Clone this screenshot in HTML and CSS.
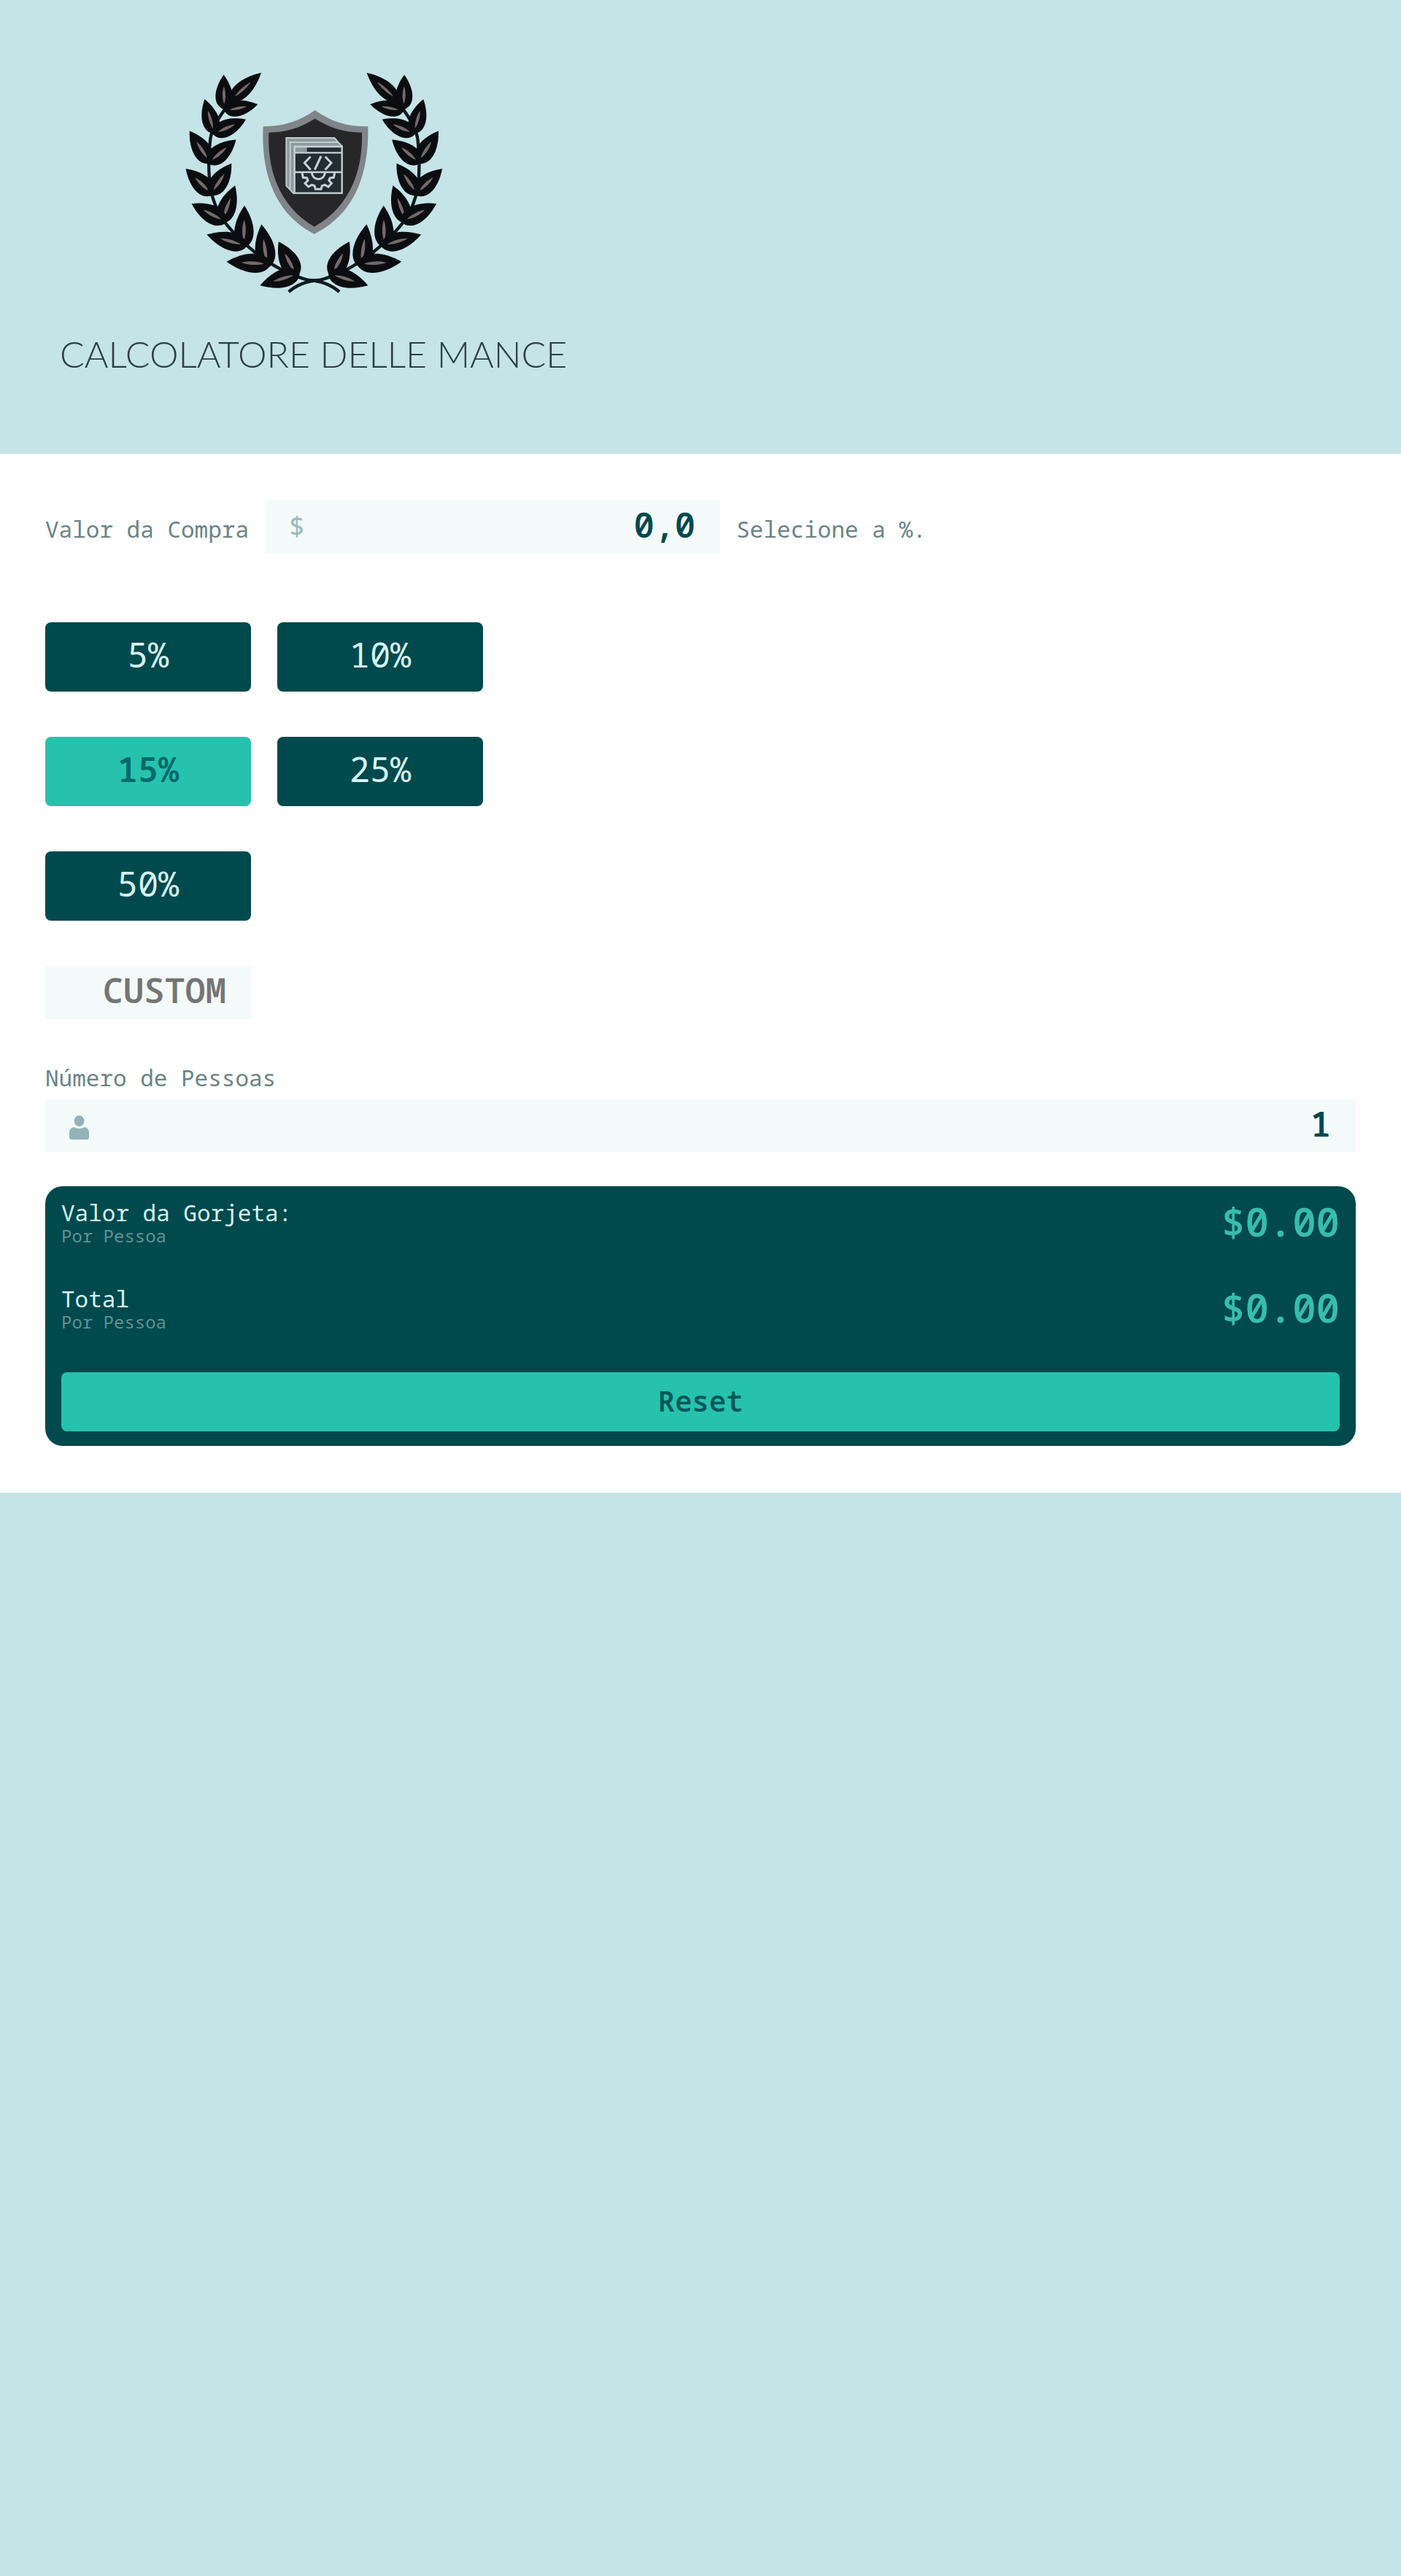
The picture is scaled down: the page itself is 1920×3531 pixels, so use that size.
FILE: index.html
```html
<!DOCTYPE html>
<html lang="pt-BR">
<head>
<meta charset="utf-8">
<title>Calcolatore delle Mance</title>
<link rel="stylesheet" href="styles.css">
</head>
<body>
<header class="header">
  <div class="brand">
    <svg class="brand-mark" viewBox="0 0 1260 1020" aria-hidden="true">
      <defs>
        <g id="leaf">
          <path fill="#0b0d10" d="M0 0C-32-12-30-58 0-102C30-58 32-12 0 0Z"/>
          <path fill="#75696a" d="M0-16C-6-32-5-54 0-68C5-54 6-32 0-16Z"/>
        </g>
        <g id="branch">
          <path fill="none" stroke="#0b1a20" stroke-width="13" d="M300 165C270 200 215 270 205 330C197 390 195 480 208 550C225 610 240 650 290 705C350 770 420 830 500 870C540 890 575 905 610 912C660 915 700 930 735 960"/>
          <use href="#leaf" transform="translate(285 175) rotate(48) scale(1.4 1.7)"/>
          <use href="#leaf" transform="translate(262 210) rotate(-1) scale(1.5 1.4)"/>
          <use href="#leaf" transform="translate(262 216) rotate(79) scale(1.4 1.38)"/>
          <use href="#leaf" transform="translate(222 310) rotate(-16) scale(1.5 1.45)"/>
          <use href="#leaf" transform="translate(215 312) rotate(66) scale(1.5 1.46)"/>
          <use href="#leaf" transform="translate(206 432) rotate(-33) scale(1.6 1.56)"/>
          <use href="#leaf" transform="translate(194 432) rotate(50) scale(1.6 1.49)"/>
          <use href="#leaf" transform="translate(216 562) rotate(-46) scale(1.6 1.53)"/>
          <use href="#leaf" transform="translate(204 562) rotate(34) scale(1.6 1.54)"/>
          <use href="#leaf" transform="translate(250 678) rotate(20) scale(1.6 1.62)"/>
          <use href="#leaf" transform="translate(272 674) rotate(-62) scale(1.6 1.6)"/>
          <use href="#leaf" transform="translate(342 780) rotate(1) scale(1.7 1.71)"/>
          <use href="#leaf" transform="translate(356 772) rotate(-74) scale(1.6 1.69)"/>
          <use href="#leaf" transform="translate(440 862) rotate(-8) scale(1.75 1.78)"/>
          <use href="#leaf" transform="translate(454 846) rotate(-87) scale(1.7 1.79)"/>
          <use href="#leaf" transform="translate(562 898) rotate(-28) scale(1.7 1.6)"/>
          <use href="#leaf" transform="translate(572 884) rotate(-107) scale(1.6 1.67)"/>
        </g>
      </defs>
      <use href="#branch"/>
      <use href="#branch" transform="translate(1262 0) scale(-1 1)"/>
      <path fill="#818488" d="M635 213C700 260 770 282 853 280C858 470 800 640 632 722C470 640 412 470 422 280C500 280 570 260 635 213Z"/>
      <path fill="#27272a" d="M635 248C700 288 755 303 828 305C832 460 780 610 632 692C490 610 438 460 445 305C515 303 570 288 635 248Z"/>
      <path fill="#8d9a9d" d="M517 327H715L730 345L748 362V557H548L533 540L517 524Z"/>
      <path fill="none" stroke="#c0cccd" stroke-width="6" d="M548 557L533 540L517 524V327H715L730 345L748 362M533 540V345H730"/>
      <path fill="#222d31" d="M551 363H746V554H551Z"/>
      <path fill="#8d9a9d" d="M551 363H602V386H551Z"/>
      <path fill="none" stroke="#c6d2d4" stroke-width="7" d="M551 363H746V554H551ZM551 388H746M551 468H746"/>
      <path fill="none" stroke="#c6d2d4" stroke-width="9" d="M617 404L592 430L617 458M677 404L702 430L677 458M660 402L634 458"/>
      <path fill="none" stroke="#c6d2d4" stroke-width="9" d="M582 471L586 490L602 492L606 502L594 514L608 528L622 520L633 524L637 538H660L664 524L676 520L690 528L703 514L692 502L697 492L712 490L716 471M622 471C626 505 672 505 676 471"/>
    </svg>
    <h1 class="brand-name">CALCOLATORE DELLE MANCE</h1>
  </div>
</header>
<main class="calculator">
  <form>
    <div class="bill">
      <label for="bill">Valor da Compra</label>
      <div class="field bill-field">
        <span class="field-icon dollar" aria-hidden="true">$</span>
        <input id="bill" class="input" type="text" inputmode="decimal" value="0,0">
      </div>
      <span id="tip-label">Selecione a %.</span>
    </div>
    <div class="tips" role="group" aria-labelledby="tip-label">
      <button type="button" class="tip">5%</button>
      <button type="button" class="tip">10%</button>
      <button type="button" class="tip tip-active">15%</button>
      <button type="button" class="tip">25%</button>
      <button type="button" class="tip">50%</button>
    </div>
    <input class="input custom" type="text" inputmode="decimal" placeholder="CUSTOM" aria-label="Custom">
    <label class="people-label" for="people">Número de Pessoas</label>
    <div class="field">
      <svg class="field-icon person" viewBox="0 0 27 33" aria-hidden="true"><path fill="#92b4b7" d="M13.500 0a7 7.500 0 0 1 0 15a7 7.500 0 0 1 0-15ZM6 16q7.500 4 15 0q6 1 6 8v6q0 3-3 3H3q-3 0-3-3v-6q0-7 6-8Z"/></svg>
      <input id="people" class="input" type="text" inputmode="numeric" value="1">
    </div>
    <section class="results">
      <div class="result">
        <p class="result-name">Valor da Gorjeta:<small>Por Pessoa</small></p>
        <output class="amount">$0.00</output>
      </div>
      <div class="result">
        <p class="result-name">Total<small>Por Pessoa</small></p>
        <output class="amount">$0.00</output>
      </div>
      <button type="reset" class="reset">Reset</button>
    </section>
  </form>
</main>
</body>
</html>
```

FILE: styles.css
```css
* { box-sizing: border-box; }

body {
  margin: 0;
  background: #c5e4e7;
  color: #6b8386;
  font-family: "Noto Sans Mono", "DejaVu Sans Mono", monospace;
  font-size: 31px;
  line-height: 40px;
}

button, input { font: inherit; }

.header { padding: 80px 82px 109px; }

.brand {
  display: inline-flex;
  flex-direction: column;
  align-items: center;
  vertical-align: top;
}

.brand-mark { width: 420px; height: 340px; }

.brand-name {
  margin: 37px 0 0;
  color: #2b3f44;
  font-family: Lato, sans-serif;
  font-size: 50px;
  font-weight: 300;
  line-height: 56px;
  white-space: nowrap;
}

.calculator { padding: 64px 62px; background: #fff; }

.bill {
  display: flex;
  align-items: baseline;
  gap: 22px;
  margin-bottom: 94px;
}

.field { position: relative; }
.bill-field { width: 624px; }

.input {
  display: block;
  width: 100%;
  height: 73px;
  padding: 0 34px 8px;
  border: 0;
  background: #f4fafa;
  color: #00494d;
  font-size: 47px;
  font-weight: 600;
  text-align: right;
}

.input::placeholder { color: #757575; opacity: 1; }

.field-icon { position: absolute; left: 33px; top: 22px; }
.dollar { top: 16px; color: #9bbcbf; font-size: 36px; font-weight: 500; }
.person { width: 27px; height: 33px; }

.tips {
  display: grid;
  grid-template-columns: repeat(2, 282px);
  gap: 62px 36px;
  margin-bottom: 62px;
}

.tip {
  height: 95px;
  padding: 0 0 8px;
  border: 0;
  border-radius: 8px;
  background: #00494d;
  color: #d5f4f5;
  font-size: 47px;
}

.tip-active { background: #26c2ad; color: #00696a; font-weight: 600; }

.custom { width: 282px; margin-bottom: 60px; }

.people-label { display: block; margin-bottom: 10px; }

.results {
  display: flex;
  flex-direction: column;
  margin-top: 46px;
  padding: 16px 22px 20px;
  border-radius: 24px;
  background: #00494d;
}

.result {
  display: flex;
  justify-content: space-between;
  align-items: flex-start;
  height: 118px;
}

.result-name { margin: 0; color: #d5f4f5; }

.result-name small {
  display: block;
  color: #5f9496;
  font-size: 24px;
  line-height: 24px;
}

.amount { color: #37bdad; font-size: 54px; font-weight: 600; line-height: 64px; }

.reset {
  height: 81px;
  margin-top: 3px;
  padding: 0 0 4px;
  border: 0;
  border-radius: 8px;
  background: #26c2ad;
  color: #00575a;
  font-size: 39px;
  font-weight: 600;
}
```
